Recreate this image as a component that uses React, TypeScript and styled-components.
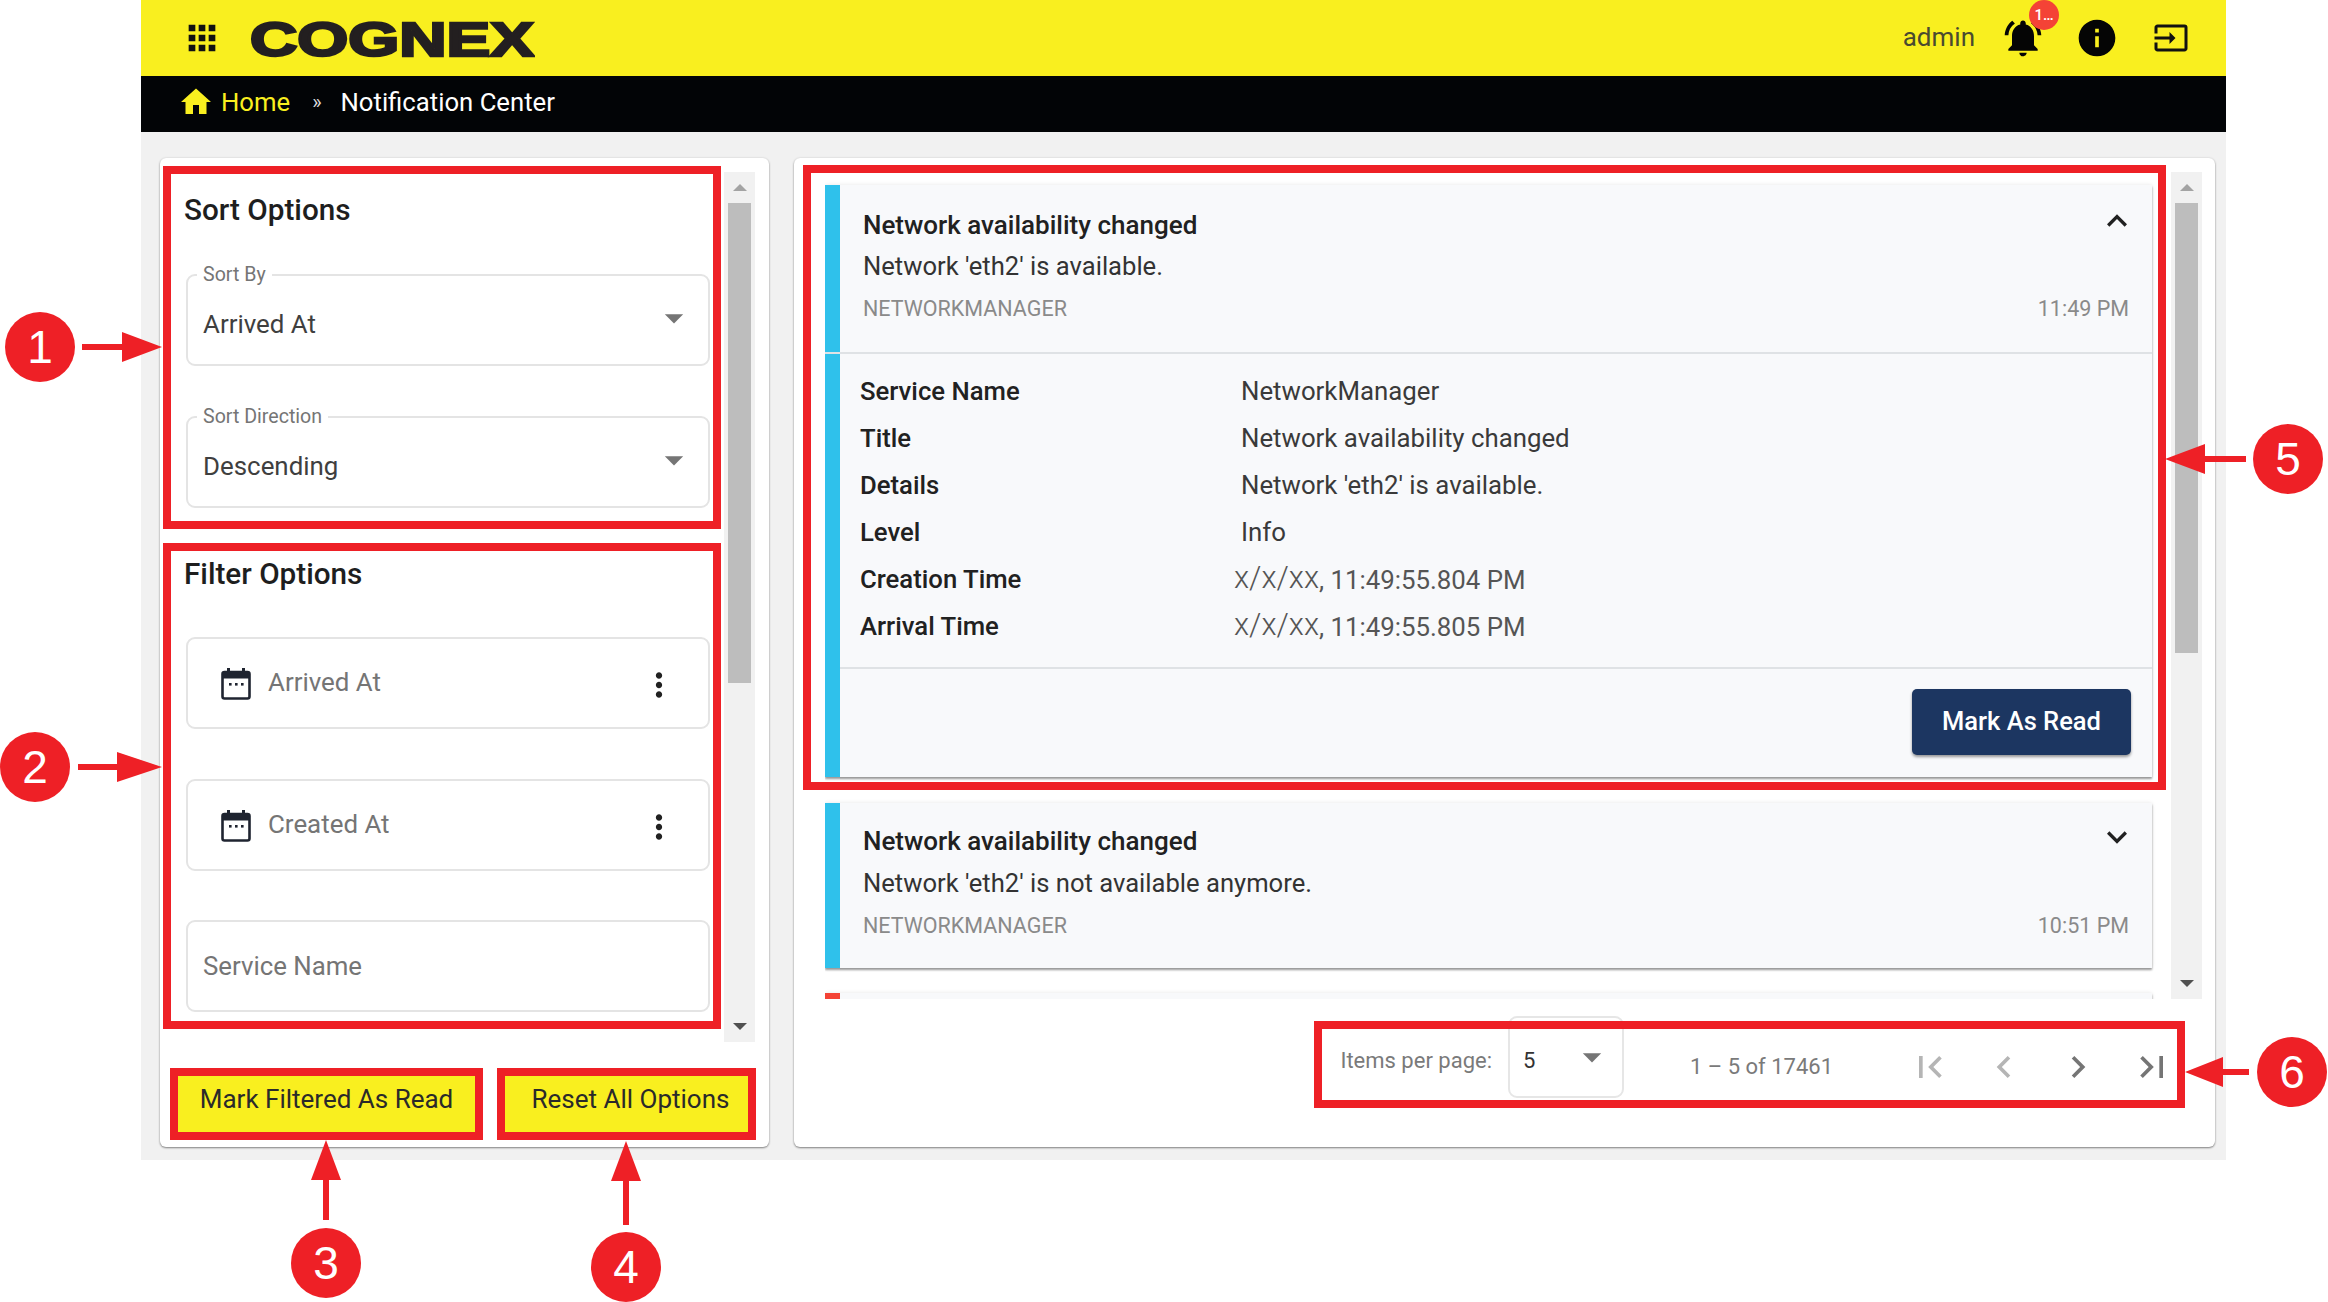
import React from 'react';
import styled, { createGlobalStyle } from 'styled-components';
import {
  MdApps, MdHome, MdNotificationsActive, MdInfo, MdInput, MdMoreVert, MdArrowDropDown,
  MdKeyboardArrowUp, MdKeyboardArrowDown, MdFirstPage, MdLastPage, MdChevronLeft, MdChevronRight,
} from 'react-icons/md';

const Global = createGlobalStyle`
  html, body { margin: 0; padding: 0; background: #fff; }
  * { box-sizing: border-box; }
  body { font-family: Roboto, "Liberation Sans", sans-serif; color: #212121; }
`;

const Page = styled.div`
  position: relative;
  width: 2328px;
  height: 1302px;
  overflow: hidden;
  background: #fff;
`;
const Shell = styled.div`
  width: 2085px;
  margin-left: 141px;
  background: #f1f1f1;
`;
const TopBar = styled.header`
  height: 76px;
  background: #f9ef1f;
  display: flex;
  align-items: center;
  padding: 0 0 0 41px;
`;
const LogoBox = styled.svg`
  margin-left: 27px;
  display: block;
`;
const TopRight = styled.div`
  margin-left: auto;
  display: flex;
  align-items: center;
`;
const UserName = styled.span`
  font-size: 26px;
  font-weight: 400;
  color: #4a4a30;
  margin: 0 26px 3px 0;
`;
const IconSlot = styled.span<{ $right: number }>`
  position: relative;
  display: flex;
  margin-right: ${p => p.$right}px;
`;
const Badge = styled.span`
  position: absolute;
  top: -16px;
  right: -14px;
  width: 30px;
  height: 30px;
  border-radius: 50%;
  background: #f44336;
  color: #fff;
  font-size: 15px;
  font-weight: 500;
  display: flex;
  align-items: center;
  justify-content: center;
`;
const NavBar = styled.nav`
  height: 56px;
  background: #020406;
  display: flex;
  align-items: center;
  padding: 0 0 4px 37px;
  font-size: 25.7px;
  color: #fff;
`;
const HomeLink = styled.span`
  color: #f9ef1f;
  margin-left: 7px;
`;
const Sep = styled.span`
  margin: 0 19px 0 22px;
  font-size: 20px;
  color: #ddd;
`;
const Main = styled.main`
  display: flex;
  gap: 25px;
  padding: 26px 11px 13px 19px;
`;
const Panel = styled.section<{ $width: number }>`
  width: ${p => p.$width}px;
  height: 989px;
  background: #fff;
  border-radius: 6px;
  box-shadow: 0 1px 2px rgba(0, 0, 0, .45), 0 0 3px rgba(0, 0, 0, .08);
`;
const LeftPanel = styled(Panel)`
  padding: 14px 14px 0 10px;
`;
const ScrollRow = styled.div<{ $height: number }>`
  display: flex;
  height: ${p => p.$height}px;
`;
const ScrollBody = styled.div`
  flex: 1;
  min-width: 0;
  overflow: hidden;
`;
const Track = styled.div`
  width: 31px;
  flex: none;
  background: #f1f1f1;
  display: flex;
  flex-direction: column;
  align-items: center;
`;
const ArrowSlot = styled.div`
  height: 31px;
  flex: none;
  margin-top: auto;
  display: flex;
  align-items: center;
  justify-content: center;
  &:first-child { margin-top: 0; }
`;
const TriUp = styled.i`
  width: 0; height: 0;
  border-left: 7px solid transparent;
  border-right: 7px solid transparent;
  border-bottom: 7px solid #a3a3a3;
`;
const TriDown = styled.i`
  width: 0; height: 0;
  border-left: 7px solid transparent;
  border-right: 7px solid transparent;
  border-top: 7px solid #505050;
`;
const Thumb = styled.div<{ $height: number }>`
  width: 23px;
  height: ${p => p.$height}px;
  background: #bdbdbd;
`;
const Options = styled.div`
  padding: 18px 14px 0 14px;
`;
const SectionTitle = styled.h2<{ $top?: number }>`
  margin: ${p => p.$top ?? 0}px 0 ${p => (p.$top ? 43 : 44)}px;
  height: 40px;
  line-height: 40px;
  font-size: 29.7px;
  font-weight: 500;
  color: #1e1e1e;
`;
const Field = styled.div<{ $gap?: number }>`
  position: relative;
  margin-left: 2px;
  height: 92px;
  margin-bottom: ${p => p.$gap ?? 0}px;
  border: 2px solid #e4e4e4;
  border-radius: 9px;
  background: #fff;
  display: flex;
  align-items: center;
  color: #4a4a4a;
`;
const FieldLabel = styled.label`
  position: absolute;
  top: -13px;
  left: 9px;
  padding: 0 6px;
  background: #fff;
  font-size: 19.6px;
  line-height: 24px;
  color: #757575;
`;
const SelectValue = styled.span`
  margin: 8px 0 0 15px;
  font-size: 25.9px;
  color: #3f3f3f;
`;
const DropIcon = styled(MdArrowDropDown)`
  margin: 0 12px 4px auto;
  color: #757575;
`;
const DateIcon = styled.svg`
  margin-left: 33px;
  flex: none;
`;
const DateText = styled.span`
  margin: 0 0 2px 17px;
  font-size: 25.9px;
  color: #757575;
`;
const Kebab = styled(MdMoreVert)`
  margin: 4px 30px 0 auto;
  color: #212121;
`;
const Placeholder = styled.span`
  margin-left: 15px;
  font-size: 25.8px;
  color: #757575;
`;
const ActionRow = styled.div`
  display: flex;
  gap: 30px;
  margin: 34px 0 0 8px;
`;
const YellowButton = styled.button<{ $width: number; $inset?: number }>`
  width: ${p => p.$width}px;
  height: 56px;
  border: none;
  padding: 0 0 10px ${p => p.$inset ?? 0}px;
  background: #f9ef1f;
  color: #2a2a2a;
  font: 400 26px Roboto, sans-serif;
`;
const RightPanel = styled(Panel)`
  padding: 14px 13px 0 31px;
`;
const List = styled.div`
  padding: 13px 6px 0 6px;
  margin: 0 13px 0 -6px;
  display: flex;
  flex-direction: column;
`;
const Card = styled.article<{ $accent: string; $gap: number }>`
  flex: none;
  margin-bottom: ${p => p.$gap}px;
  background: #f8f9fb;
  border-left: 15px solid ${p => p.$accent};
  box-shadow: 0 2px 2px rgba(0, 0, 0, .38), 0 0 4px rgba(0, 0, 0, .1);
`;
const CardHead = styled.div<{ $open?: boolean }>`
  padding: ${p => (p.$open ? '22.5px 23px 28.5px' : '20.5px 23px 27.5px')};
`;
const TitleRow = styled.div`
  display: flex;
  justify-content: space-between;
  height: 34px;
`;
const CardTitle = styled.h3`
  margin: 0;
  font-size: 26px;
  line-height: 34px;
  font-weight: 500;
  color: #212121;
`;
const Chevron = styled.span`
  display: flex;
  margin: -7px -8px 0 0;
  height: 40px;
  color: #212121;
`;
const Message = styled.p<{ $open?: boolean }>`
  margin: ${p => (p.$open ? 7 : 8)}px 0 0;
  font-size: 25.6px;
  line-height: 34px;
  color: #333;
`;
const MetaRow = styled.div`
  margin-top: 11px;
  display: flex;
  justify-content: space-between;
  font-size: 21.5px;
  line-height: 30px;
  color: #8a8a8a;
`;
const Rule = styled.hr<{ $full?: boolean }>`
  margin: 0 0 0 ${p => (p.$full ? -15 : 0)}px;
  border: none;
  height: 2px;
  background: #dfe2e5;
`;
const Details = styled.dl`
  margin: 0;
  padding: 13px 0 18px 20px;
  display: grid;
  grid-template-columns: 381px 1fr;
  grid-auto-rows: 47px;
  align-items: center;
`;
const DetailKey = styled.dt`
  font-size: 25.7px;
  font-weight: 500;
  color: #212121;
`;
const DetailValue = styled.dd<{ $shift?: boolean }>`
  margin: 0 0 0 ${p => (p.$shift ? -7 : 0)}px;
  font-size: 25.8px;
  color: ${p => (p.$shift ? '#555' : '#3a3a3a')};
`;
const DatePart = styled.span`
  font-size: 31px;
  font-weight: 300;
  line-height: 30px;
  vertical-align: 1px;
`;
const CardFoot = styled.div`
  height: 108px;
  padding: 20px 21px 0 0;
  display: flex;
  justify-content: flex-end;
  align-items: flex-start;
`;
const NavyButton = styled.button`
  width: 219px;
  height: 66px;
  border: none;
  border-radius: 5px;
  padding: 0 0 2px;
  background: #1c3661;
  color: #fff;
  font: 500 25.5px Roboto, sans-serif;
  box-shadow: 0 2px 3px rgba(0, 0, 0, .4);
`;
const Pager = styled.div`
  height: 134px;
  padding: 17px 28px 0 0;
  display: flex;
  justify-content: flex-end;
  align-items: flex-start;
  font-size: 22px;
  color: #7a7a7a;
`;
const PagerLabel = styled.span`
  line-height: 90px;
  margin-right: 16px;
`;
const PagerSelect = styled.div`
  width: 116px;
  height: 82px;
  border: 2px solid #e6e6e6;
  border-radius: 9px;
  display: flex;
  align-items: center;
  color: #333;
`;
const PagerValue = styled.span`
  margin: 6px 0 0 13px;
  font-size: 22px;
`;
const PagerDrop = styled(MdArrowDropDown)`
  margin-left: auto;
  margin-right: 8px;
  color: #757575;
`;
const PagerRange = styled.span`
  margin: 0 75px 0 66px;
  line-height: 102px;
`;
const PagerIcons = styled.div`
  margin-top: 29px;
  display: flex;
  gap: 30px;
`;
const PagerIcon = styled.span<{ $off?: boolean }>`
  display: flex;
  color: ${p => (p.$off ? '#b5b5b5' : '#757575')};
`;
const Mark = styled.div<{ $x: number; $y: number; $w: number; $h: number }>`
  position: absolute;
  left: ${p => p.$x}px;
  top: ${p => p.$y}px;
  width: ${p => p.$w}px;
  height: ${p => p.$h}px;
  border: 8px solid #ee2026;
  pointer-events: none;
`;
const Bullet = styled.div<{ $x: number; $y: number }>`
  position: absolute;
  left: ${p => p.$x - 35}px;
  top: ${p => p.$y - 35}px;
  width: 70px;
  height: 70px;
  border-radius: 50%;
  background: #ee2026;
  color: #fff;
  font: 400 46px "Liberation Sans", Arial, sans-serif;
  display: flex;
  align-items: center;
  justify-content: center;
`;
const ArrowLayer = styled.svg`
  position: absolute;
  left: 0;
  top: 0;
  pointer-events: none;
`;

const Calendar = () => (
  <DateIcon width="30" height="33" viewBox="0 0 30 33" aria-hidden>
    <rect x="1.5" y="5" width="27" height="26.5" rx="2" fill="#fff" stroke="#1f2430" strokeWidth="2.6" />
    <rect x="1.5" y="5" width="27" height="6.5" fill="#1f2430" />
    <rect x="6" y="1" width="3" height="6" fill="#1f2430" />
    <rect x="21" y="1" width="3" height="6" fill="#1f2430" />
    <rect x="8" y="16" width="2.6" height="2.6" fill="#1f2430" />
    <rect x="14" y="16" width="2.6" height="2.6" fill="#1f2430" />
    <rect x="20" y="16" width="2.6" height="2.6" fill="#1f2430" />
  </DateIcon>
);

const details: [string, React.ReactNode, boolean?][] = [
  ['Service Name', 'NetworkManager'],
  ['Title', 'Network availability changed'],
  ['Details', "Network 'eth2' is available."],
  ['Level', 'Info'],
  ['Creation Time', <><DatePart>x/x/xx</DatePart>, 11:49:55.804 PM</>, true],
  ['Arrival Time', <><DatePart>x/x/xx</DatePart>, 11:49:55.805 PM</>, true],
];

const marks = [
  { x: 163, y: 166, w: 558, h: 363 },
  { x: 163, y: 543, w: 558, h: 486 },
  { x: 170, y: 1068, w: 313, h: 72 },
  { x: 497, y: 1068, w: 259, h: 72 },
  { x: 803, y: 165, w: 1363, h: 625 },
  { x: 1314, y: 1021, w: 871, h: 87 },
];
const bullets = [
  { n: 1, x: 40, y: 347 },
  { n: 2, x: 35, y: 767 },
  { n: 3, x: 326, y: 1263 },
  { n: 4, x: 626, y: 1267 },
  { n: 5, x: 2288, y: 459 },
  { n: 6, x: 2292, y: 1072 },
];

const Arrows = () => (
  <ArrowLayer width="2328" height="1302" viewBox="0 0 2328 1302" aria-hidden>
    <g fill="#ee2026">
      <path d="M82 344h40v-12l40 15-40 15v-12H82z" />
      <path d="M78 764h39v-12l45 15-45 15v-12H78z" />
      <path d="M323 1220v-40h-12l15-40 15 40h-12v40z" />
      <path d="M623 1225v-44h-12l15-40 15 40h-12v44z" />
      <path d="M2246 456h-41v-12l-40 15 40 15v-12h41z" />
      <path d="M2249 1069h-26v-12l-38 15 38 15v-12h26z" />
    </g>
  </ArrowLayer>
);

export default function App() {
  return (
    <Page>
      <Global />
      <Shell>
        <TopBar>
          <MdApps size={40} color="#111" />
          <LogoBox width="286" height="60" viewBox="0 0 286 60" role="img" aria-label="COGNEX">
            <text x="1" y="48" fontFamily="'Liberation Sans', Arial, sans-serif" fontWeight="700" fontSize="49"
              textLength="284" lengthAdjust="spacingAndGlyphs" fill="#231f20" stroke="#231f20" strokeWidth="2.6">COGNEX</text>
          </LogoBox>
          <TopRight>
            <UserName>admin</UserName>
            <IconSlot $right={30}>
              <MdNotificationsActive size={44} color="#050505" />
              <Badge>1…</Badge>
            </IconSlot>
            <IconSlot $right={34}><MdInfo size={44} color="#050505" /></IconSlot>
            <IconSlot $right={37}><MdInput size={36} color="#111" /></IconSlot>
          </TopRight>
        </TopBar>
        <NavBar>
          <MdHome size={36} color="#f9ef1f" />
          <HomeLink>Home</HomeLink>
          <Sep>»</Sep>
          <span>Notification Center</span>
        </NavBar>
        <Main>
          <LeftPanel $width={609}>
            <ScrollRow $height={870}>
              <ScrollBody>
                <Options>
                  <SectionTitle>Sort Options</SectionTitle>
                  <Field $gap={50}>
                    <FieldLabel>Sort By</FieldLabel>
                    <SelectValue>Arrived At</SelectValue>
                    <DropIcon size={44} />
                  </Field>
                  <Field>
                    <FieldLabel>Sort Direction</FieldLabel>
                    <SelectValue>Descending</SelectValue>
                    <DropIcon size={44} />
                  </Field>
                  <SectionTitle $top={46}>Filter Options</SectionTitle>
                  <Field $gap={50}>
                    <Calendar />
                    <DateText>Arrived At</DateText>
                    <Kebab size={38} />
                  </Field>
                  <Field $gap={49}>
                    <Calendar />
                    <DateText>Created At</DateText>
                    <Kebab size={38} />
                  </Field>
                  <Field>
                    <Placeholder>Service Name</Placeholder>
                  </Field>
                </Options>
              </ScrollBody>
              <Track>
                <ArrowSlot><TriUp /></ArrowSlot>
                <Thumb $height={480} />
                <ArrowSlot><TriDown /></ArrowSlot>
              </Track>
            </ScrollRow>
            <ActionRow>
              <YellowButton $width={297}>Mark Filtered As Read</YellowButton>
              <YellowButton $width={243} $inset={8}>Reset All Options</YellowButton>
            </ActionRow>
          </LeftPanel>
          <RightPanel $width={1421}>
            <ScrollRow $height={827}>
              <ScrollBody>
                <List>
                  <Card $accent="#2fc1eb" $gap={26}>
                    <CardHead $open>
                      <TitleRow>
                        <CardTitle>Network availability changed</CardTitle>
                        <Chevron><MdKeyboardArrowUp size={40} /></Chevron>
                      </TitleRow>
                      <Message $open>Network 'eth2' is available.</Message>
                      <MetaRow><span>NETWORKMANAGER</span><span>11:49 PM</span></MetaRow>
                    </CardHead>
                    <Rule $full />
                    <Details>
                      {details.map(([k, v, shift]) => (
                        <React.Fragment key={k}>
                          <DetailKey>{k}</DetailKey>
                          <DetailValue $shift={shift}>{v}</DetailValue>
                        </React.Fragment>
                      ))}
                    </Details>
                    <Rule />
                    <CardFoot><NavyButton>Mark As Read</NavyButton></CardFoot>
                  </Card>
                  <Card $accent="#2fc1eb" $gap={25}>
                    <CardHead>
                      <TitleRow>
                        <CardTitle>Network availability changed</CardTitle>
                        <Chevron><MdKeyboardArrowDown size={40} /></Chevron>
                      </TitleRow>
                      <Message>Network 'eth2' is not available anymore.</Message>
                      <MetaRow><span>NETWORKMANAGER</span><span>10:51 PM</span></MetaRow>
                    </CardHead>
                  </Card>
                  <Card $accent="#f44336" $gap={0}>
                    <CardHead />
                  </Card>
                </List>
              </ScrollBody>
              <Track>
                <ArrowSlot><TriUp /></ArrowSlot>
                <Thumb $height={450} />
                <ArrowSlot><TriDown /></ArrowSlot>
              </Track>
            </ScrollRow>
            <Pager>
              <PagerLabel>Items per page:</PagerLabel>
              <PagerSelect>
                <PagerValue>5</PagerValue>
                <PagerDrop size={44} />
              </PagerSelect>
              <PagerRange>1 – 5 of 17461</PagerRange>
              <PagerIcons>
                <PagerIcon $off><MdFirstPage size={44} /></PagerIcon>
                <PagerIcon $off><MdChevronLeft size={44} /></PagerIcon>
                <PagerIcon><MdChevronRight size={44} /></PagerIcon>
                <PagerIcon><MdLastPage size={44} /></PagerIcon>
              </PagerIcons>
            </Pager>
          </RightPanel>
        </Main>
      </Shell>
      {marks.map(m => <Mark key={`${m.x}-${m.y}`} $x={m.x} $y={m.y} $w={m.w} $h={m.h} />)}
      <Arrows />
      {bullets.map(b => <Bullet key={b.n} $x={b.x} $y={b.y}>{b.n}</Bullet>)}
    </Page>
  );
}
